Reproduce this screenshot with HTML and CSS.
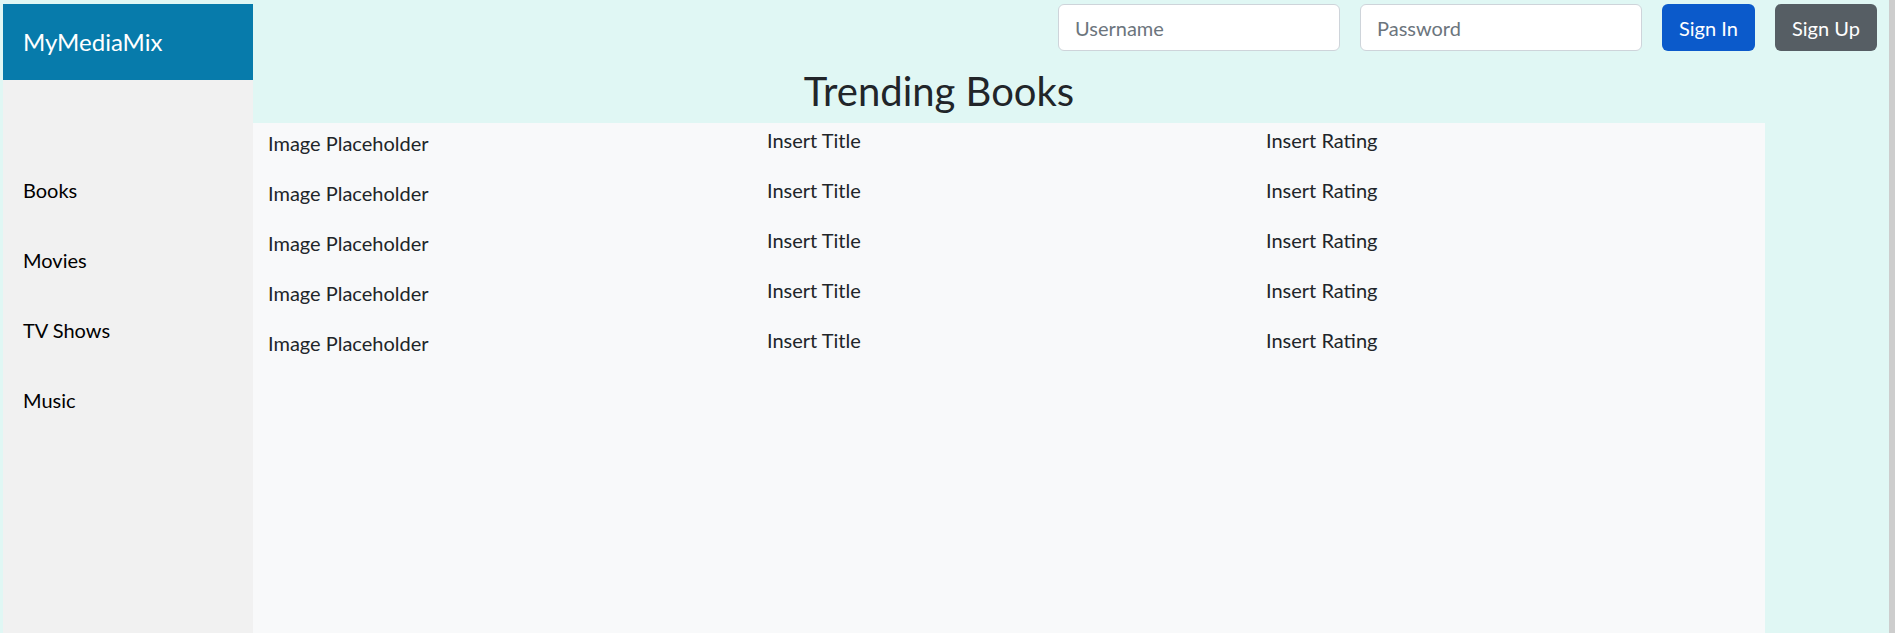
FILE: index.html
```html
<!DOCTYPE html>
<html lang="en">
<head>
<meta charset="utf-8">
<title>MyMediaMix</title>
<link rel="stylesheet" href="styles.css">
</head>
<body>
<div class="page">
  <aside class="sidebar">
    <div class="brand">MyMediaMix</div>
    <nav class="nav">
      <a class="nav-link" href="#">Books</a>
      <a class="nav-link" href="#">Movies</a>
      <a class="nav-link" href="#">TV Shows</a>
      <a class="nav-link" href="#">Music</a>
    </nav>
  </aside>
  <main class="main">
    <header class="topbar">
      <input class="field" type="text" placeholder="Username">
      <input class="field" type="password" placeholder="Password">
      <button class="btn btn-primary">Sign In</button>
      <button class="btn btn-secondary">Sign Up</button>
    </header>
    <h1 class="title">Trending Books</h1>
    <section class="panel">
      <div class="row"><span class="cell cell-img">Image Placeholder</span><span class="cell">Insert Title</span><span class="cell">Insert Rating</span></div>
      <div class="row"><span class="cell cell-img">Image Placeholder</span><span class="cell">Insert Title</span><span class="cell">Insert Rating</span></div>
      <div class="row"><span class="cell cell-img">Image Placeholder</span><span class="cell">Insert Title</span><span class="cell">Insert Rating</span></div>
      <div class="row"><span class="cell cell-img">Image Placeholder</span><span class="cell">Insert Title</span><span class="cell">Insert Rating</span></div>
      <div class="row"><span class="cell cell-img">Image Placeholder</span><span class="cell">Insert Title</span><span class="cell">Insert Rating</span></div>
    </section>
  </main>
</div>
<div class="scrollbar"></div>
</body>
</html>
```
FILE: styles.css
```css
* { box-sizing: border-box; }
html, body { height: 100%; }
body {
  margin: 0;
  background: #e0f7f4;
  font-family: Lato, "Open Sans", sans-serif;
  color: #212529;
  overflow: hidden;
}
.page {
  display: flex;
  height: 100%;
  padding: 4px 6px 0 3px;
}
.sidebar {
  width: 250px;
  flex: none;
  background: #f1f1f1;
  display: flex;
  flex-direction: column;
}
.brand {
  height: 76px;
  display: flex;
  align-items: center;
  padding-left: 20px;
  background: #077bab;
  color: #fff;
  font-size: 24px;
  line-height: 36px;
}
.nav {
  display: flex;
  flex-direction: column;
  padding-top: 75px;
}
.nav-link {
  padding: 20px;
  font-size: 20px;
  line-height: 30px;
  color: #000;
  text-decoration: none;
}
.main {
  flex: 1;
  display: flex;
  flex-direction: column;
  min-width: 0;
}
.topbar {
  display: flex;
  justify-content: flex-end;
  gap: 20px;
  padding-right: 12px;
  height: 47px;
}
.field {
  width: 282px;
  height: 47px;
  padding: 0 16px;
  border: 1px solid #ced4da;
  border-radius: 6px;
  background: #fff;
  font: inherit;
  font-size: 20px;
  color: #212529;
}
.field::placeholder { color: #6c757d; }
.btn {
  height: 47px;
  padding: 0;
  border: none;
  border-radius: 6px;
  font: inherit;
  font-size: 20px;
  color: #fff;
}
.btn-primary { background: #0b5acb; width: 93px; }
.btn-secondary { background: #565e64; width: 102px; }
.title {
  margin: 16px 0 8px;
  padding-right: 264px;
  text-align: center;
  font-size: 40px;
  line-height: 48px;
  font-weight: 400;
}
.panel {
  flex: 1;
  width: 1512px;
  background: #f8f9fa;
  padding-left: 15px;
}
.row {
  display: grid;
  grid-template-columns: repeat(3, 499px);
  height: 50px;
  padding-top: 2px;
  font-size: 20px;
  line-height: 30px;
}
.cell-img { padding-top: 3px; }
.scrollbar {
  position: fixed;
  top: 0;
  right: 0;
  width: 6px;
  height: 100%;
  background: #cdcdcd;
}
```
